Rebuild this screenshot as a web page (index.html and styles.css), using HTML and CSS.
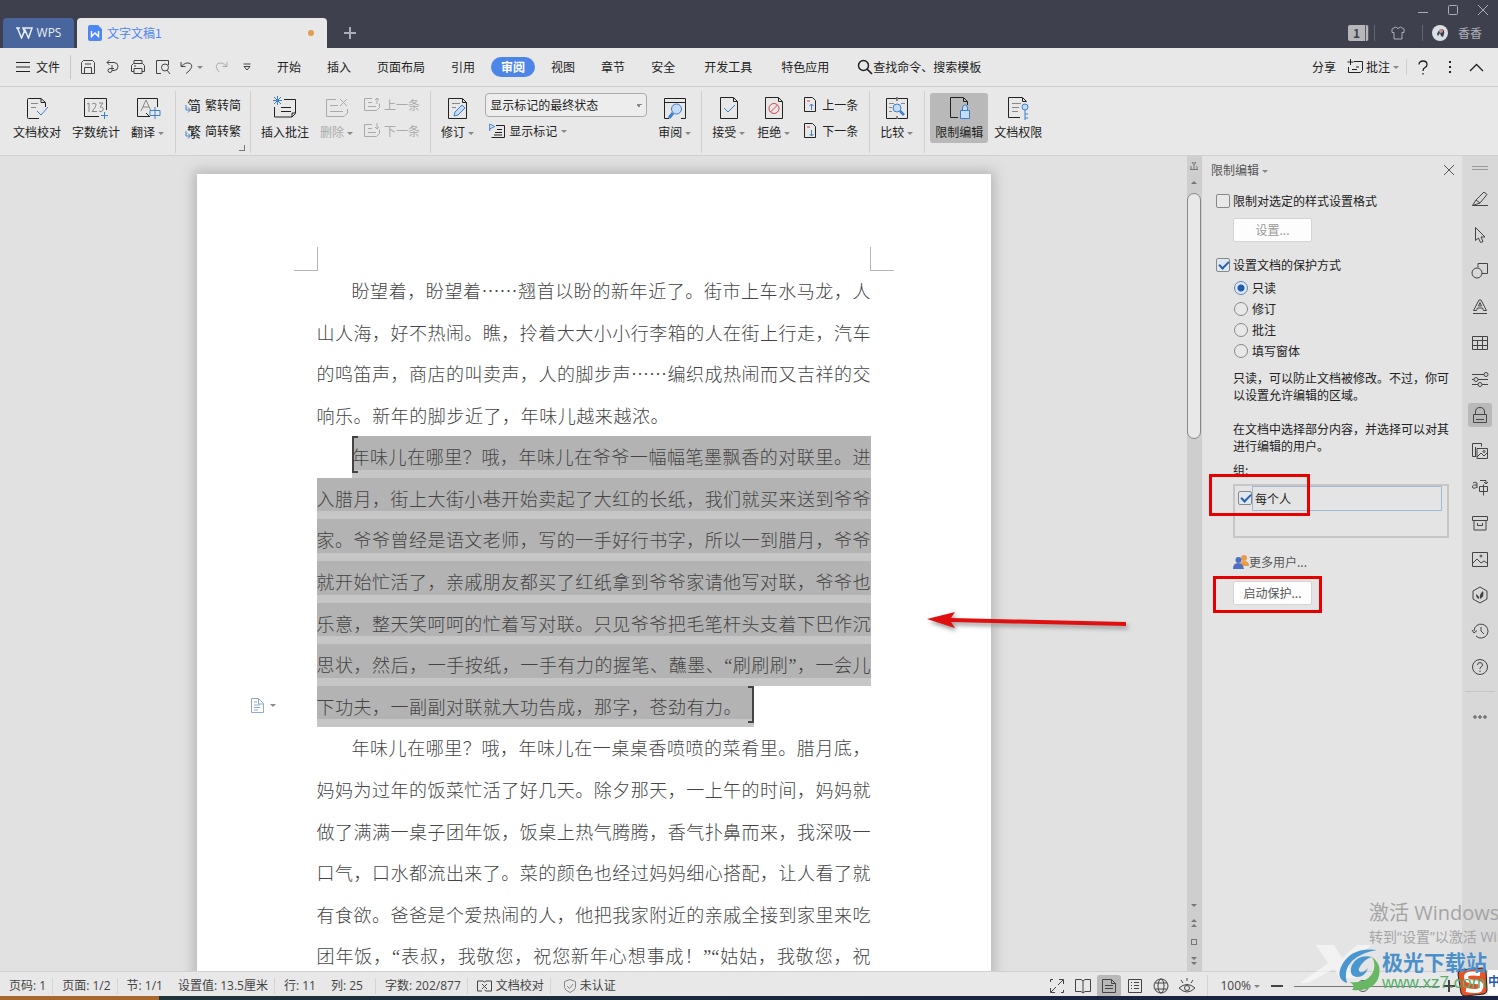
FILE: index.html
```html
<!DOCTYPE html>
<html lang="zh-CN">
<head>
<meta charset="utf-8">
<title>文字文稿1 - WPS</title>
<link rel="stylesheet" href="styles.css">
</head>
<body>
<header class="titlebar">
  <div class="tabs">
    <button class="wps"><svg width="17" height="12" viewBox="0 0 17 12"><path d="M0 1h4M1.500 1l4 10L9 3l3.500 8 3.500-10H7L9 6M5.500 11L8 5" stroke-width="1.500"/></svg>WPS</button>
    <div class="doc-tab"><svg width="14" height="16" viewBox="0 0 14 16"><path d="M2 0h8l4 4v10a2 2 0 0 1-2 2H2a2 2 0 0 1-2-2V2a2 2 0 0 1 2-2z" fill="#4e86f5" stroke="none"/><path d="M3.500 6v5.500L7 8l3.500 3.500V6" stroke="#fff" stroke-width="1.400"/></svg><span>文字文稿1</span><i class="dirty"></i></div>
    <button class="add" aria-label="新建"><svg width="12" height="12"><path d="M6 0v12M0 6h12" stroke-width="2"/></svg></button>
  </div>
  <div class="win">
    <div class="win-row controls">
      <button aria-label="最小化"><svg width="10" height="10"><path d="M0 7.500h10"/></svg></button>
      <button aria-label="最大化"><svg width="10" height="10"><rect x=".5" y=".5" width="9" height="9" rx="1"/></svg></button>
      <button aria-label="关闭"><svg width="10" height="10"><path d="M0 0l10 10M10 0L0 10"/></svg></button>
    </div>
    <div class="win-row account">
      <span class="count"><b>1</b></span>
      <svg class="shirt" width="14" height="14" viewBox="0 0 14 14"><path d="M4.500 1L1 3v3.500h2V13h8V6.500h2V3L9.500 1Q7 4 4.500 1z"/></svg>
      <span class="user"><svg width="16" height="16" viewBox="0 0 16 16"><circle cx="8" cy="8" r="8" fill="#d9dfe6" stroke="none"/><path d="M5 9q2-5 5-5 3 1 2 5l-1 3-2-1-1-3-2 3z" fill="#3a3d48" stroke="none"/><circle cx="9" cy="6" r="2" fill="#c98f88" stroke="none"/></svg>香香</span>
    </div>
  </div>
</header>

<nav class="menu">
  <button class="file"><svg width="14" height="12"><path d="M0 1.500h14M0 6h14M0 10.500h14"/></svg>文件</button>
  <div class="quick">
    <button aria-label="保存"><svg width="16" height="16" viewBox="0 0 16 16"><path d="M1.500 3.500l2-2h9l2 2v11h-13zM4.500 14V8.500h7V14M5 5h6"/></svg></button>
    <button aria-label="输出"><svg width="16" height="16" viewBox="0 0 16 16"><path d="M2 3.500h7a4 4 0 0 1 0 8H7M4.500 1L2 3.500 4.500 6M7 6v5.500a2 2 0 1 1-2-2h4"/></svg></button>
    <button aria-label="打印"><svg width="16" height="16" viewBox="0 0 16 16"><path d="M4 4.500v-3h8v3M4 12.500H1.500v-6l2-2h9l2 2v6H12M4 9.500h8v5H4zM4 7h2"/></svg></button>
    <button aria-label="打印预览"><svg width="16" height="16" viewBox="0 0 16 16"><path d="M6 14.500H1.500v-13h12V6M12 11l3 4"/><circle cx="10" cy="8.500" r="3.500"/></svg></button>
    <button class="undo" aria-label="撤销"><svg width="14" height="14" viewBox="0 0 14 14"><path d="M1 2v4.500h4.500M1 6.500Q6 1.500 10 3.500T9 11l-3 2.500"/></svg><i class="caret"></i></button>
    <button class="off" aria-label="恢复"><svg width="14" height="14" viewBox="0 0 14 14"><path d="M13 2v4.500H8.500M13 6.500Q8 1.500 4 3.500T5 12"/></svg></button>
    <button class="more" aria-label="更多"><svg width="8" height="8" viewBox="0 0 8 8"><path d="M.5 1h7M1 3.500h6L4 7z"/></svg></button>
  </div>
  <div class="items">
    <button>开始</button><button>插入</button><button>页面布局</button><button>引用</button><button class="active">审阅</button><button>视图</button><button>章节</button><button>安全</button>
  </div>
  <div class="items extra"><button>开发工具</button><button>特色应用</button></div>
  <button class="search"><svg width="16" height="16" viewBox="0 0 16 16"><circle cx="6.500" cy="6.500" r="5" stroke-width="1.500"/><path d="M10 10l5 5" stroke-width="1.700"/></svg>查找命令、搜索模板</button>
  <div class="menu-right">
    <button>分享</button>
    <button class="note"><svg width="16" height="16" viewBox="0 0 16 16"><path d="M7 2.500h8.500v9l-2 2H1.500V8M3.500 0v6M.5 3h6M5 10.500h5M9 8h3"/></svg>批注<i class="caret"></i></button>
    <button class="help" aria-label="帮助"><svg width="10" height="15" viewBox="0 0 10 15"><path d="M1 4.500Q1 1 5 1t4 3.500Q9 6.500 7 7.500T5 11M5 13v1.500" stroke-width="1.300"/></svg></button>
    <button class="dots" aria-label="选项"><svg width="2" height="14"><path d="M1 1v2M1 6v2M1 11v2" stroke-width="2"/></svg></button>
    <button aria-label="收起功能区"><svg width="15" height="9" viewBox="0 0 15 9"><path d="M1 8l6.500-6.500L14 8" stroke-width="1.300"/></svg></button>
  </div>
</nav>

<section class="ribbon">
  <div class="group first">
    <button class="big"><svg width="26" height="24" viewBox="0 0 26 24"><path d="M15 22.500H4.500q-1 0-1-1v-18q0-1 1-1H17l4.500 4V11M17 3v3.500h4"/><path class="g" d="M7 7.500h7M7 11.500h5"/><path class="b" d="M13 15l4 4 7-8"/></svg>文档校对</button>
    <button class="big"><svg width="26" height="24" viewBox="0 0 26 24"><path d="M16 20.500H1.500v-18h22V14"/><path class="g" d="M4 8l2-1v9M9 8q4-2 4 1 0 2-4 6.500h5M16 7h4l-3 4q4 0 3 3t-4 1"/><path class="b" d="M21.500 16v7M18 19.500h7"/></svg>字数统计</button>
    <button class="big"><svg width="26" height="24" viewBox="0 0 26 24"><path d="M14 20.500H2.500v-18h20V11M11 17l4 4"/><path class="g" d="M6 15l5-11 5 11M8 11h6"/><path class="b" d="M15 14.500h10v5H15zM20 11v12"/></svg><span>翻译<i class="caret"></i></span></button>
  </div>
  <div class="group corner">
    <div class="stack">
      <button><span class="glyph">简<svg width="6" height="8" viewBox="0 0 6 8"><path class="b" d="M1 0v5h4M3 2.500L5.500 5 3 7.500"/></svg></span>繁转简</button>
      <button><span class="glyph">繁<svg width="6" height="8" viewBox="0 0 6 8"><path class="b" d="M1 0v5h4M3 2.500L5.500 5 3 7.500"/></svg></span>简转繁</button>
    </div>
  </div>
  <div class="group">
    <button class="big"><svg width="26" height="24" viewBox="0 0 26 24"><path d="M12 3.500h11.500v14L20 21H2.500V11M9 11.500h10M9 15.500h10"/><path d="M23 17h-3v4" /><path class="b" d="M5.500 0v9M1 4.500h9M2 1l7 7M9 1L2 8"/></svg>插入批注</button>
    <button class="big off"><svg width="26" height="24" viewBox="0 0 26 24"><path d="M12 3.500H2.500v17H20l3.500-3.500v-4M6 9.500h8M6 15.500h13M16 3l7 7M23 3l-7 7"/></svg><span>删除<i class="caret"></i></span></button>
    <div class="stack off">
      <button><svg width="16" height="16" viewBox="0 0 16 16"><path d="M8 1.500H.5v12h12l3-3v-4M4 5.500h4M4 9.500h8M13 7V1M11 3l2-2 2 2"/></svg>上一条</button>
      <button><svg width="16" height="16" viewBox="0 0 16 16"><path d="M8 1.500H.5v12h12l3-3v-4M4 5.500h4M4 9.500h8M13 0v6M11 4l2 2 2-2"/></svg>下一条</button>
    </div>
  </div>
  <div class="group">
    <button class="big"><svg width="26" height="24" viewBox="0 0 26 24"><path d="M3.500 2.500h14l4 4v16h-18zM17.500 3v3.500h4"/><path class="g" d="M7 7.500h8M7 11.500h4"/><path class="b fill" d="M9 20l1-4 7-7 3 3-7 7z"/></svg><span>修订<i class="caret"></i></span></button>
    <div class="marks">
      <select aria-label="显示状态"><option>显示标记的最终状态</option></select>
      <button><svg width="16" height="16" viewBox="0 0 16 16"><path d="M7 2.500h8.500v12H2.500M8 6.500h5M6 9.500h7M5 12h8"/><path class="b" d="M.7 8V1l5 2.500-5 2.500"/></svg>显示标记<i class="caret"></i></button>
    </div>
    <button class="big"><svg width="26" height="24" viewBox="0 0 26 24"><path d="M7 22.500H2.500v-20h21v20H19M3 6.500h20"/><circle class="b fill" cx="14.500" cy="13" r="5"/><path class="b" d="M11 17l-4 5" stroke-width="3"/></svg><span>审阅<i class="caret"></i></span></button>
  </div>
  <div class="group review">
    <button class="big"><svg width="26" height="24" viewBox="0 0 26 24"><path d="M4.500 1.500h13l4 4v17h-17zM17.500 2v3.500h4"/><path class="b" d="M8 12l4 4 7-7"/></svg><span>接受<i class="caret"></i></span></button>
    <button class="big"><svg width="26" height="24" viewBox="0 0 26 24"><path d="M4.500 1.500h13l4 4v17h-17zM17.500 2v3.500h4"/><circle class="r" cx="13" cy="12.500" r="5"/><path class="r" d="M9.500 16l7-7"/></svg><span>拒绝<i class="caret"></i></span></button>
    <div class="stack">
      <button><svg width="16" height="16" viewBox="0 0 16 16"><path d="M2.500.5h8l3 3v11h-11z"/><path class="r" d="M5 4h3"/><path class="b" d="M9.500 13V7M7.500 9l2-2 2 2"/></svg>上一条</button>
      <button><svg width="16" height="16" viewBox="0 0 16 16"><path d="M2.500.5h8l3 3v11h-11z"/><path class="r" d="M5 4h3"/><path class="b" d="M9.500 7v6M7.500 11l2 2 2-2"/></svg>下一条</button>
    </div>
  </div>
  <div class="group review">
    <button class="big"><svg width="26" height="24" viewBox="0 0 26 24"><path d="M12.500 2.500h-10v20h10M14 2.500h9.500v20H14M13 1v4M13 20v3"/><path class="g" d="M5 7.500h5M5 11.500h3M17 7.500h4M5 15.500h3"/><circle class="b fill" cx="13" cy="12" r="4"/><path class="b" d="M16 15l4 4" stroke-width="2.500"/></svg><span>比较<i class="caret"></i></span></button>
  </div>
  <div class="group last">
    <button class="big pressed"><svg width="26" height="24" viewBox="0 0 26 24"><path d="M12 21.500H4.500v-20h13l4 4V9M17.500 2v3.500h4"/><path class="b fill" d="M14.500 14.500h9v8h-9zM16.500 14v-2q0-3 2.500-3t2.500 3v2"/></svg>限制编辑</button>
    <button class="big"><svg width="26" height="24" viewBox="0 0 26 24"><path d="M15 21.500H3.500v-20h14l4 4M17.500 2v3.500h4"/><path class="g" d="M7 7.500h9M7 11.500h7M7 15.500h6"/><circle class="b fill" cx="20" cy="11" r="3"/><path class="b" d="M20 14v10M20 18h3M20 22h3"/></svg>文档权限</button>
  </div>
</section>

<main class="work">
  <div class="canvas">
    <article class="page">
      <div class="crop"><i class="left"></i><i class="right"></i></div>
      <div class="text">
        <p><span class="line indent">盼望着，盼望着……翘首以盼的新年近了。街市上车水马龙，人</span>
        <span class="line">山人海，好不热闹。瞧，拎着大大小小行李箱的人在街上行走，汽车</span>
        <span class="line">的鸣笛声，商店的叫卖声，人的脚步声……编织成热闹而又吉祥的交</span>
        <span class="line short">响乐。新年的脚步近了，年味儿越来越浓。</span></p>
        <p class="selected"><span class="line inset open">年味儿在哪里？哦，年味儿在爷爷一幅幅笔墨飘香的对联里。进</span>
        <span class="line">入腊月，街上大街小巷开始卖起了大红的长纸，我们就买来送到爷爷</span>
        <span class="line">家。爷爷曾经是语文老师，写的一手好行书字，所以一到腊月，爷爷</span>
        <span class="line">就开始忙活了，亲戚朋友都买了红纸拿到爷爷家请他写对联，爷爷也</span>
        <span class="line">乐意，整天笑呵呵的忙着写对联。只见爷爷把毛笔杆头支着下巴作沉</span>
        <span class="line">思状，然后，一手按纸，一手有力的握笔、蘸墨、<q>刷刷刷</q>，一会儿</span>
        <span class="line close">下功夫，一副副对联就大功告成，那字，苍劲有力。</span></p>
        <p><span class="line indent">年味儿在哪里？哦，年味儿在一桌桌香喷喷的菜肴里。腊月底，</span>
        <span class="line">妈妈为过年的饭菜忙活了好几天。除夕那天，一上午的时间，妈妈就</span>
        <span class="line">做了满满一桌子团年饭，饭桌上热气腾腾，香气扑鼻而来，我深吸一</span>
        <span class="line">口气，口水都流出来了。菜的颜色也经过妈妈细心搭配，让人看了就</span>
        <span class="line">有食欲。爸爸是个爱热闹的人，他把我家附近的亲戚全接到家里来吃</span>
        <span class="line">团年饭，<q>表叔，我敬您，祝您新年心想事成！</q><q class="run">姑姑，我敬您，祝</q></span></p>
      </div>
      <button class="para-mark" aria-label="段落布局"><svg width="13" height="15" viewBox="0 0 13 15"><path d="M.5.500h7l5 5v9H.5zM3 4h3M3 7h6M3 9.500h6M3 12h4M7.500 1v5h5"/></svg><i class="caret"></i></button>
      <svg class="arrow" width="206" height="24" viewBox="0 0 206 24"><path d="M3 9L31 2l-4 6 175 4v4L27 12l4 6z"/></svg>
    </article>
  </div>

  <div class="scroll">
    <svg width="8" height="8" viewBox="0 0 8 8"><path d="M2 0h4L4 3zM0 7.500h8M1 4v3M4 3v4M7 4v3"/></svg>
    <svg width="6" height="3" viewBox="0 0 6 3"><path class="solid" d="M0 3l3-3 3 3z"/></svg>
    <div class="thumb"></div>
    <div class="scroll-end">
      <svg width="6" height="3" viewBox="0 0 6 3"><path class="solid" d="M0 0l3 3 3-3z"/></svg>
      <svg width="6" height="8" viewBox="0 0 6 8"><path class="solid" d="M0 3l3-3 3 3zM0 8l3-3 3 3z"/></svg>
      <svg width="6" height="6" viewBox="0 0 6 6"><rect x=".5" y=".5" width="5" height="5"/></svg>
      <svg width="6" height="8" viewBox="0 0 6 8"><path class="solid" d="M0 0l3 3 3-3zM0 5l3 3 3-3z"/></svg>
    </div>
  </div>

  <aside class="panel">
    <div class="panel-head"><button>限制编辑<i class="caret"></i></button><button aria-label="关闭窗格"><svg width="10" height="10"><path d="M0 0l10 10M10 0L0 10"/></svg></button></div>
    <label class="check"><input type="checkbox">限制对选定的样式设置格式</label>
    <button class="push" disabled>设置...</button>
    <label class="check second"><input type="checkbox" checked>设置文档的保护方式</label>
    <div class="radios">
      <label><input type="radio" name="mode" checked>只读</label>
      <label><input type="radio" name="mode">修订</label>
      <label><input type="radio" name="mode">批注</label>
      <label><input type="radio" name="mode">填写窗体</label>
    </div>
    <p>只读，可以防止文档被修改。不过，你可以设置允许编辑的区域。</p>
    <p>在文档中选择部分内容，并选择可以对其进行编辑的用户。</p>
    <div class="group-label">组:</div>
    <div class="list"><input type="checkbox" id="everyone" checked><label for="everyone">每个人</label><i class="callout"></i></div>
    <a class="users" href="#"><svg width="16" height="16" viewBox="0 0 16 16"><circle cx="11" cy="4" r="3" fill="#e99a4c"/><path d="M7 12q0-5 4-5 5 0 5 5z" fill="#e99a4c"/><circle cx="5.500" cy="6" r="3" fill="#4d6fc4"/><path d="M0 15q0-6 5-6t6 6z" fill="#4d6fc4"/></svg>更多用户...</a>
    <div class="start"><button class="push">启动保护...</button><i class="callout"></i></div>
  </aside>

  <nav class="side">
    <svg class="grip" width="16" height="4"><path d="M0 .5h16M0 3.500h16"/></svg>
    <button aria-label="样式"><svg width="18" height="18" viewBox="0 0 18 18"><path d="M1.500 15.500L5 10l8-8 3 2.500-7 8.500zM1.500 15.500H17M5 10l4 3"/></svg></button>
    <button aria-label="选择"><svg width="18" height="18" viewBox="0 0 18 18"><path d="M4.500 1.500v13l3-2.500 2 4.500 2.500-1-2-4.500h4z"/></svg></button>
    <button aria-label="形状"><svg width="18" height="18" viewBox="0 0 18 18"><circle cx="6" cy="11" r="5"/><path d="M7 5.500v-4h9.500v10H11"/></svg></button>
    <button aria-label="艺术字"><svg width="18" height="18" viewBox="0 0 18 18"><path d="M2.500 12.500L8 2h2l5.500 10.500h-3l-1-2.500h-5l-1 2.500zM7.500 8L9 4.500 10.500 8zM2 15.500h14"/></svg></button>
    <button aria-label="表格"><svg width="18" height="18" viewBox="0 0 18 18"><path d="M1.500 2.500h15v13h-15zM1.500 6.500h15M1.500 11.500h15M6.500 6.500v9M11.500 2.500v13"/></svg></button>
    <button aria-label="设置"><svg width="18" height="18" viewBox="0 0 18 18"><path d="M1 4.500h12M17 9.500H7M1 9.500h2M1 14.500h6M11 14.500h6"/><circle cx="15" cy="4.500" r="2"/><circle cx="5" cy="9.500" r="2"/><circle cx="9" cy="14.500" r="2"/></svg></button>
    <button class="pressed" aria-label="限制编辑"><svg width="18" height="18" viewBox="0 0 18 18"><path d="M2.500 8.500h13v8h-13zM4.500 8V6q0-4.500 4.500-4.500T13.500 6v2M5 13.500h8" /></svg></button>
    <button aria-label="图片库"><svg width="18" height="18" viewBox="0 0 18 18"><path d="M5 14.500H1.500v-13h9v3M4.500 5v9M6 6.500h10.500v10H6zM6 15l4-4 3 3 3-3"/><circle cx="13" cy="9.500" r="1"/></svg></button>
    <button aria-label="翻译"><svg width="18" height="18" viewBox="0 0 18 18"><path d="M2 5q4-2 4 1v4M6 7Q1 6.500 1.500 9T6 9M9 2.500h6v3M13 4l2 2 2-2M8.500 8.500h8v5h-8zM12.500 6.500v11"/></svg></button>
    <button aria-label="归档"><svg width="18" height="18" viewBox="0 0 18 18"><path d="M1.500 2.500h15v4h-15zM3 6.500v9.500h12V6.500M6.500 9v2.500h5V9"/></svg></button>
    <button aria-label="图片"><svg width="18" height="18" viewBox="0 0 18 18"><path d="M1.500 2.500h15v14h-15zM2 13l4-4 4 4 3-2 3 2"/><circle cx="10" cy="6" r="1"/></svg></button>
    <button aria-label="素材"><svg width="18" height="18" viewBox="0 0 18 18"><path d="M9 1l7 4v8l-7 4-7-4V5z"/><path d="M8 13Q4 11 5.500 8L8 11zM9 13q-1-5 3-8 2 5-3 8z" fill="#444" stroke="none"/></svg></button>
    <button aria-label="历史"><svg width="18" height="18" viewBox="0 0 18 18"><path d="M3 9a7 7 0 1 1 2 5M1 8l2 3 3-2.500M10 5v4l3 3"/></svg></button>
    <button aria-label="帮助"><svg width="18" height="18" viewBox="0 0 18 18"><circle cx="9" cy="9" r="7.500"/><path d="M6.500 7Q6.500 4.500 9 4.500T11.500 7Q11.500 8 10 9t-1 2M9 12.500v1.500"/></svg></button>
    <button class="etc" aria-label="更多"><svg width="14" height="4"><circle cx="2" cy="2" r="1.200"/><circle cx="7" cy="2" r="1.200"/><circle cx="12" cy="2" r="1.200"/></svg></button>
  </nav>
</main>

<footer class="status">
  <span>页码: 1</span><span>页面: 1/2</span><span class="plain">节: 1/1</span><span>设置值: 13.5厘米</span><span class="plain">行: 11</span><span class="col">列: 25</span><span>字数: 202/877</span>
  <span><svg width="15" height="12" viewBox="0 0 15 12"><path d="M5 11H.5V1H6l1.500 1L9 1h5.500v10H9l-1.500-1M5 4l5 5M10 4L5 9"/></svg>文档校对</span>
  <span class="plain cert"><svg width="12" height="14" viewBox="0 0 12 14"><path d="M6 .5l5.500 2v6q0 2.500-5.500 5-5.500-2.500-5.500-5v-6zM3 7l2.500 2.500L9 5"/></svg>未认证</span>
  <div class="views">
    <button aria-label="全屏"><svg width="16" height="16" viewBox="0 0 16 16"><path d="M10 1.500h4.500V6M14 2L9 7M6 14.500H1.500V10M2 14l5-5M1.500 4V1.500H4M14.500 12v2.500H12"/></svg></button>
    <button aria-label="阅读版式"><svg width="16" height="16" viewBox="0 0 16 16"><path d="M8 2.500v12M.5 1.500H6l2 1.500 2-1.500h5.500v12H10L8 15l-2-1.500H.5z"/></svg></button>
    <button class="pressed" aria-label="页面视图"><svg width="16" height="16" viewBox="0 0 16 16"><path d="M1.500 1.500h9l4 4v9h-13zM4 7.500h8M4 10.500h8M10.500 2v3.500h4"/></svg></button>
    <button aria-label="大纲"><svg width="16" height="16" viewBox="0 0 16 16"><path d="M1.500 1.500h13v13h-13zM4 4.500h1M7 4.500h5M4 7.500h1M7 7.500h5M4 10.500h1M7 10.500h5"/></svg></button>
    <button aria-label="Web版式"><svg width="16" height="16" viewBox="0 0 16 16"><circle cx="8" cy="8" r="7"/><ellipse cx="8" cy="8" rx="3" ry="7"/><path d="M2 5h12M2 11h12"/></svg></button>
    <button aria-label="护眼模式"><svg width="18" height="16" viewBox="0 0 18 16"><path d="M1 10q8-7 16 0-8 8-16 0zM9 0v3M3 2l2 3M15 2l-2 3"/><circle cx="9" cy="10" r="2.500"/></svg></button>
  </div>
  <button class="zoom">100%<i class="caret"></i></button>
  <div class="zoomer">
    <button class="minus" aria-label="缩小"><svg width="12" height="12"><path d="M0 6h12" stroke-width="2"/></svg></button>
    <input type="range" min="0" max="100" value="47" aria-label="缩放">
    <button aria-label="放大"><svg width="12" height="12"><path d="M0 6h12M6 0v12" stroke-width="2"/></svg></button>
  </div>
</footer>
<div class="taskbar"></div>

<div class="activate"><strong>激活 Windows</strong><span>转到“设置”以激活 Windows。</span></div>
<div class="ime"><svg width="32" height="30" viewBox="0 0 32 30"><path d="M5 3l21-2q3 0 4 3l1 19q0 3-3 4L9 29q-3 0-4-3L2 7q0-3 3-4z" fill="#e8532a"/><path d="M24 7Q10 5 10 10t9 5 5 8q-3 2-14 0" stroke="#fff" stroke-width="4"/></svg><span>中</span></div>
<div class="brand">
  <svg width="84" height="50" viewBox="0 0 84 50"><path d="M16 2h18l8 13L57 2h15L47 21 56 35H40l-6-9L8 40H0L28 20z" fill="#fff" fill-opacity=".5"/><path d="M77 7Q50 4 41 24q-5 12 6 16-4-13 5-22 8-8 25-11z" fill="#4a96ce"/><path d="M72 14q-14-3-20 8-4 11 5 12 8 0 11-9-4 5-8 4-3-2 1-7 4-6 11-8z" fill="#4a96ce"/><path d="M72 14q5 8 0 17-7 10-22 8 6 4 2 8 20 2 26-11 5-14-6-22z" fill="#67b765"/></svg>
  <div><b>极光下载站</b><span>www.xz7.com</span></div>
</div>
</body>
</html>
```
FILE: styles.css
```css
* { box-sizing: border-box; }
body {
  margin: 0;
  height: 100vh;
  display: flex;
  flex-direction: column;
  overflow: hidden;
  position: relative;
  background: #e1e1e1;
  color: #222;
  font: 12px/16px "Noto Sans CJK SC", sans-serif;
}
button, select, input { font: inherit; color: inherit; margin: 0; }
button { border: 0; padding: 0; background: none; white-space: nowrap; }
svg { fill: none; stroke: currentColor; flex: none; display: block; }
.b { stroke: #3f7fd0; }
.b.fill { fill: #c5dcf5; }
.g { stroke: #888; }
.off .g { stroke: currentColor; }
.r { stroke: #d9434a; }
.solid { fill: currentColor; stroke: none; }
.caret {
  display: inline-block;
  margin-left: 3px;
  vertical-align: middle;
  border: solid transparent;
  border-width: 3px 3px 0;
  border-top-color: #888;
}
.off { color: #aaa; }

/* title bar */
.titlebar { height: 48px; flex: none; display: flex; justify-content: space-between; background: #3e414d; color: #aaaeb8; }
.tabs { display: flex; align-items: flex-end; padding-left: 3px; gap: 3px; }
.wps { display: flex; align-items: center; justify-content: center; gap: 4px; width: 71px; height: 30px; border-radius: 4px 4px 0 0; background: #48659d; color: #e9edf5; font-family: "Open Sans", sans-serif; }
.doc-tab { display: flex; align-items: center; gap: 5px; width: 250px; height: 30px; padding: 0 13px 0 11px; border-radius: 4px 4px 0 0; background: #e8e8e8; color: #4e86f5; }
.dirty { width: 6px; height: 6px; border-radius: 3px; margin-left: auto; background: #e39b4f; }
.add { height: 30px; padding: 0 14px; }
.win { display: flex; flex-direction: column; }
.win-row { display: flex; align-items: center; justify-content: flex-end; }
.controls { height: 20px; gap: 20px; padding-right: 10px; }
.account { height: 26px; padding-right: 16px; gap: 17px; }
.count { padding-right: 5px; border-right: 1px solid #62656f; margin-right: -1px; }
.count b { display: block; width: 21px; height: 16px; background: #b7b7b9; border-right: 4px double #5a5d68; color: #3e414d; text-align: center; border-radius: 2px; }
.user { display: flex; gap: 10px; padding-left: 9px; border-left: 1px solid #62656f; }

/* menu */
.menu { height: 39px; flex: none; display: flex; align-items: center; background: #e8e8e8; border-bottom: 1px solid #d0d0d0; }
.file { display: flex; align-items: center; gap: 6px; padding: 4px 10px 4px 16px; border-right: 1px solid #c6c6c6; }
.quick { display: flex; align-items: center; gap: 9px; padding-left: 9px; color: #444; }
.quick .undo { display: flex; align-items: center; }
.quick .off { margin-left: 2px; color: #aaa; }
.quick .more { margin-left: 6px; }
.items { display: flex; align-items: center; gap: 6px; margin-left: 16px; }
.items button { padding: 2px 10px; }
.items .active { border-radius: 10px; background: #4e86e8; color: #fff; font-weight: 700; }
.items.extra { margin-left: 9px; gap: 9px; }
.search { display: flex; align-items: center; margin-left: 18px; }
.menu-right { display: flex; align-items: center; margin-left: auto; padding-right: 14px; gap: 11px; }
.note { display: flex; align-items: center; gap: 3px; padding-right: 7px; border-right: 1px solid #d0d0d0; }
.help { margin-right: 10px; }
.dots { margin-right: 7px; }

/* ribbon */
.ribbon { height: 69px; flex: none; display: flex; padding: 4px 0 2px; background: #e8e8e8; border-bottom: 1px solid #d0d0d0; }
.group { display: flex; gap: 11px; padding: 0 10px; border-right: 1px solid #d0d0d0; }
.group.first { padding: 0 11px 0 13px; }
.group.review { gap: 12px; padding: 0 11px 0 10px; }
.group.last { gap: 6px; padding: 0 5px; border: 0; }
.group.corner { position: relative; padding: 0 9px; }
.corner::after { content: ""; position: absolute; right: 5px; bottom: 2px; width: 5px; height: 5px; border: solid #777; border-width: 0 1px 1px 0; }
.big { display: flex; flex-direction: column; align-items: center; gap: 4px; height: 50px; margin-top: 2px; padding-top: 3px; }
.pressed { background: #b9b9b9; border-radius: 3px; }
.big.pressed { padding: 3px 5px 0; }
.stack { display: flex; flex-direction: column; gap: 10px; padding-top: 6px; }
.stack button, .marks button { display: flex; align-items: center; gap: 4px; }
.glyph { position: relative; width: 16px; padding-left: 2px; font-size: 14px; font-weight: 400; }
.glyph svg { position: absolute; left: 0; bottom: 0; background: #e8e8e8; }
.marks { display: flex; flex-direction: column; gap: 6px; padding-top: 2px; }
.marks button { padding-left: 4px; }
.marks .caret, .note .caret { margin-left: 0; }
select {
  appearance: none;
  width: 162px;
  height: 24px;
  padding: 0 4px;
  border: 1px solid #aaa;
  border-radius: 4px;
  background: linear-gradient(45deg, transparent 50%, #888 50%) 150px 10px / 3px 3px no-repeat, linear-gradient(-45deg, transparent 50%, #888 50%) 153px 10px / 3px 3px no-repeat, #ededed;
}

/* document */
.work { flex: 1; min-height: 0; display: flex; overflow: hidden; }
.canvas { flex: 1; min-width: 0; overflow: hidden; padding-top: 18px; }
.page { position: relative; width: 794px; margin: 0 auto; padding-top: 73px; min-height: 1123px; background: #fff; box-shadow: 0 0 12px 3px #b4b4b4; }
.crop { display: flex; justify-content: space-between; height: 23px; padding: 0 97px; }
.crop i { width: 24px; height: 24px; border-bottom: 1px solid #b5b5b5; }
.crop .left { border-right: 1px solid #b5b5b5; }
.crop .right { border-left: 1px solid #b5b5b5; }
.text { padding: 0 120px; font-size: 18px; font-weight: 300; line-height: 2.31; color: #444; }
.text p { margin: 0; }
.line { display: block; white-space: nowrap; text-align: justify; text-align-last: justify; }
.indent { padding-left: 35px; }
.inset { margin-left: 35px; }
.line.short { width: 352px; }
.line.close { width: 437px; padding-right: 12px; }
.selected .line { position: relative; background: linear-gradient(#b3b3b3 80%, #c6c6c6 80%); }
.open::before, .close::after { content: ""; position: absolute; top: 0; width: 4px; height: 33px; border: 2px solid #444; }
.open::before { left: 0; border-right: 0; }
.close::after { right: 0; border-left: 0; }
q { quotes: none; }
q::before, q::after { font-family: "Liberation Serif", serif; line-height: 1; }
q::before { content: "“"; }
q::after { content: "”"; }
q.run::after { content: none; }
.para-mark { position: absolute; left: 54px; top: 524px; display: flex; align-items: center; color: #8fa9d4; gap: 3px; }
.arrow { position: absolute; left: 727px; top: 436px; filter: drop-shadow(2px 3px 2px #999); }
.arrow path { fill: #e01010; stroke: none; }

/* scroll bar */
.scroll { width: 15px; display: flex; flex-direction: column; align-items: center; background: #cecece; color: #777; padding: 6px 1px 6px 0; }
.scroll > svg + svg { margin-top: 11px; }
.thumb { width: 14px; height: 246px; margin-top: 9px; border: 1px solid #888; border-radius: 7px; background: #e8e8e8; }
.scroll-end { display: flex; flex-direction: column; align-items: center; gap: 12px; margin-top: auto; }

/* task pane */
.panel { width: 260px; padding: 0 8px 0 9px; background: #e4e4e4; }
.panel > * { margin-left: 22px; }
.panel-head { display: flex; justify-content: space-between; align-items: center; margin: 6px 0 0; color: #555; }
.check, .radios label { display: flex; align-items: center; gap: 3px; }
.panel .check { margin: 15px 0 0 5px; }
.panel .second { margin-top: 15px; }
input[type="checkbox"], input[type="radio"] { appearance: none; width: 14px; height: 14px; flex: none; border: 1px solid #888; border-radius: 2px; background: #e8e8e8; }
input[type="checkbox"]:checked { background: #dfe8f2; }
input[type="checkbox"]:checked::after { content: ""; display: block; width: 8px; height: 4px; margin: 2px; border: solid #2862ae; border-width: 0 0 2px 2px; transform: rotate(-45deg); }
input[type="radio"] { border-radius: 7px; }
input[type="radio"]:checked { border-color: #5d87bb; background: radial-gradient(#1f5cb0 3px, #dfe8f2 4px); }
.push { width: 79px; height: 24px; border: 1px solid #d4d4d4; border-radius: 2px; background: #fdfdfd; color: #555; }
.push:disabled { color: #999; margin-top: 9px; }
.radios { display: flex; flex-direction: column; gap: 5px; margin-top: 7px; padding-left: 1px; }
.radios label { gap: 4px; }
.panel p { width: 217px; margin-top: 10px; margin-bottom: 0; line-height: 17px; }
.panel p + p { margin-top: 17px; }
.group-label { height: 16px; margin-top: 8px; }
.list { position: relative; display: flex; align-items: flex-start; width: 216px; height: 54px; margin-top: 6px; padding: 0 5px 0 3px; border: 2px solid #c6c6c6; }
.list input { margin-top: 5px; }
.list label { flex: 1; height: 25px; padding: 4px 2px; border: 1px solid #a3b8d6; }
.callout { position: absolute; border: 3px solid #e60000; }
.list .callout { left: -26px; top: -12px; width: 101px; height: 42px; }
.users { display: flex; align-items: center; margin-top: 16px; color: #555; text-decoration: none; }
.users svg { stroke: none; }
.start { position: relative; width: 79px; margin-top: 11px; }
.start .callout { left: -20px; top: -5px; width: 109px; height: 37px; }

/* side bar */
.side { width: 36px; display: flex; flex-direction: column; align-items: center; gap: 12px; padding-top: 10px; background: #d8d8d8; color: #444; }
.side button { display: grid; place-items: center; width: 24px; height: 24px; }
.side .grip { color: #999; margin-bottom: 5px; }
.side .etc { width: 30px; height: 50px; border-top: 1px solid #c6c6c6; }

/* status bar */
.status { height: 25px; flex: none; display: flex; align-items: center; padding-left: 9px; background: #e8e8e8; border-top: 1px solid #d0d0d0; color: #444; padding-top: 4px; font-family: "Open Sans", "Noto Sans CJK SC", sans-serif; }
.status span { display: flex; align-items: center; gap: 4px; padding-right: 6px; margin-right: 9px; border-right: 1px solid #d4d4d4; }
.status .plain { border: 0; }
.status .col { padding-right: 12px; }
.status .cert { margin-left: 4px; }
.cert svg { color: #888; }
.views { display: flex; gap: 2px; margin-left: auto; padding-right: 8px; border-right: 1px solid #d4d4d4; }
.views button { display: grid; place-items: center; width: 24px; height: 22px; }
.zoom { margin-left: 12px; }
.zoomer { display: flex; align-items: center; gap: 3px; padding: 0 43px 0 11px; }
.minus { margin-right: 8px; }
input[type="range"] { appearance: none; width: 146px; height: 14px; background: linear-gradient(#777, #777) 0 7px / 100% 1px no-repeat; }
input[type="range"]::-webkit-slider-thumb { appearance: none; width: 12px; height: 12px; border: 1px solid #555; border-radius: 6px; background: #e8e8e8; }
.taskbar { height: 4px; flex: none; background: linear-gradient(90deg, #a8672c 159px, #1e3438 159px, #1a2440 60%); }

/* desktop overlays */
.activate { position: absolute; left: calc(100% - 129px); right: 0; bottom: 53px; display: flex; flex-direction: column; gap: 2px; overflow: hidden; white-space: nowrap; color: #a4a4a4; font-family: "Open Sans", "Noto Sans CJK SC", sans-serif; }
.activate strong { font-size: 20px; line-height: 24px; font-weight: 400; }
.activate span { font-size: 14px; line-height: 20px; }
.brand { position: absolute; right: 11px; bottom: 7px; display: flex; align-items: flex-end; pointer-events: none; }
.brand svg { stroke: none; }
.brand div { display: flex; flex-direction: column; margin-left: -2px; white-space: nowrap; }
.brand b { font-size: 21px; line-height: 24px; color: #4a90cc; }
.brand span { font: 17px/20px "Liberation Sans", sans-serif; color: #56b06a; }
.ime { position: absolute; right: 0; bottom: 3px; width: 42px; display: flex; align-items: center; overflow: hidden; }
.ime span { flex: none; width: 12px; height: 25px; background: #fff; color: #1f5cb0; font-weight: 700; line-height: 22px; }
```
